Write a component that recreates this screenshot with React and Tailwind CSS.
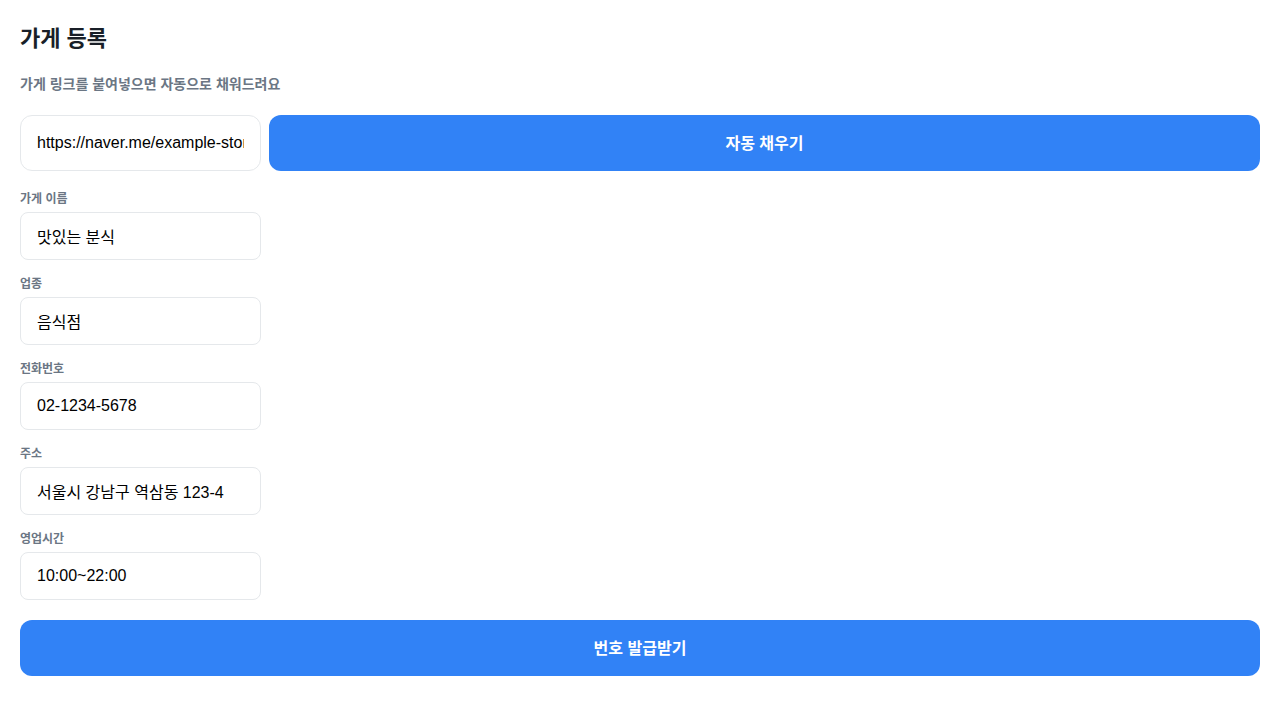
import React from "react";

const fields = [
  { label: "가게 이름", value: "맛있는 분식" },
  { label: "업종", value: "음식점" },
  { label: "전화번호", value: "02-1234-5678" },
  { label: "주소", value: "서울시 강남구 역삼동 123-4" },
  { label: "영업시간", value: "10:00~22:00" },
];

const App = () => {
  return (
    <div
      className="min-h-screen bg-white px-5 pt-[21px] pb-5 text-[#191f28]"
      style={{ fontFamily: '"Liberation Sans", "Noto Sans CJK KR", sans-serif' }}
    >
      <h1 className="text-[22px] font-bold leading-[36px]">가게 등록</h1>
      <p className="mt-[17px] text-[14px] font-bold leading-[20px] text-[#6b7684]">
        가게 링크를 붙여넣으면 자동으로 채워드려요
      </p>

      {/* 링크 입력 */}
      <div className="mt-[21px] flex gap-2">
        <input
          type="text"
          defaultValue="https://naver.me/example-store"
          className="h-[56px] w-[241px] shrink-0 rounded-xl border border-[#e5e8eb] px-4 text-[16px] text-black outline-none"
        />
        <button className="h-[56px] flex-1 rounded-xl bg-[#3182f6] pt-[2px] text-[16px] font-bold text-white">
          자동 채우기
        </button>
      </div>

      {/* 가게 정보 */}
      <div className="mt-5 flex flex-col gap-4">
        {fields.map((f) => (
          <div key={f.label} className="flex flex-col gap-[5px]">
            <label className="text-[12px] font-bold leading-[16px] text-[#6b7684]">
              {f.label}
            </label>
            <input
              type="text"
              defaultValue={f.value}
              className="h-[48px] w-[241px] rounded-lg border border-[#e5e8eb] px-4 text-[16px] text-black outline-none"
            />
          </div>
        ))}
      </div>

      <button className="mt-5 h-[56px] w-full rounded-xl bg-[#3182f6] pt-[2px] text-[16px] font-bold text-white">
        번호 발급받기
      </button>
    </div>
  );
};

export default App;
